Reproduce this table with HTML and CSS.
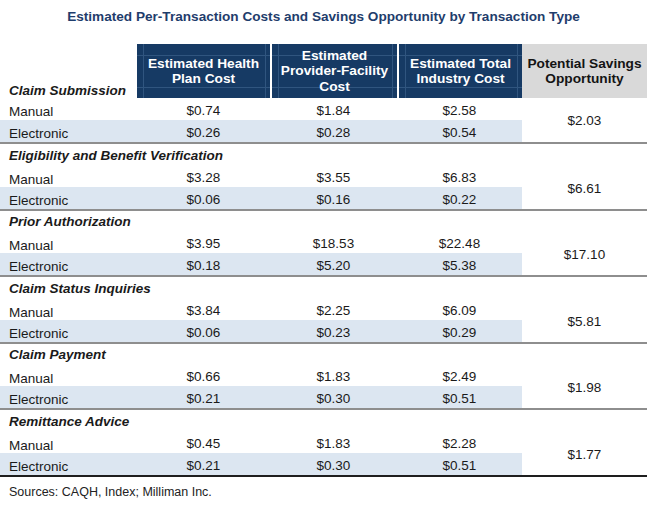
FILE: index.html
```html
<!DOCTYPE html>
<html lang="en">
<head>
<meta charset="utf-8">
<title>Per-Transaction Costs</title>
<link rel="stylesheet" href="styles.css">
</head>
<body>
<main class="page">
  <h1 class="title">Estimated Per-Transaction Costs and Savings Opportunity by Transaction Type</h1>
  <div class="table">
    <section class="group group-head">
      <div class="cat cat-head">Claim Submission</div>
      <div class="th navy">Estimated Health<br>Plan Cost</div>
      <div class="th navy sep">Estimated<br>Provider-Facility<br>Cost</div>
      <div class="th navy sep">Estimated Total<br>Industry Cost</div>
      <div class="th gray">Potential Savings<br>Opportunity</div>
      <div class="lbl">Manual</div><div class="val">$0.74</div><div class="val">$1.84</div><div class="val">$2.58</div>
      <div class="save">$2.03</div>
      <div class="lbl e">Electronic</div><div class="val e">$0.26</div><div class="val e">$0.28</div><div class="val e">$0.54</div>
    </section>
    <section class="group tall">
      <div class="cat">Eligibility and Benefit Verification</div>
      <div class="lbl">Manual</div><div class="val">$3.28</div><div class="val">$3.55</div><div class="val">$6.83</div>
      <div class="save">$6.61</div>
      <div class="lbl e">Electronic</div><div class="val e">$0.06</div><div class="val e">$0.16</div><div class="val e">$0.22</div>
    </section>
    <section class="group">
      <div class="cat">Prior Authorization</div>
      <div class="lbl">Manual</div><div class="val">$3.95</div><div class="val">$18.53</div><div class="val">$22.48</div>
      <div class="save">$17.10</div>
      <div class="lbl e">Electronic</div><div class="val e">$0.18</div><div class="val e">$5.20</div><div class="val e">$5.38</div>
    </section>
    <section class="group tall">
      <div class="cat">Claim Status Inquiries</div>
      <div class="lbl">Manual</div><div class="val">$3.84</div><div class="val">$2.25</div><div class="val">$6.09</div>
      <div class="save">$5.81</div>
      <div class="lbl e">Electronic</div><div class="val e">$0.06</div><div class="val e">$0.23</div><div class="val e">$0.29</div>
    </section>
    <section class="group">
      <div class="cat">Claim Payment</div>
      <div class="lbl">Manual</div><div class="val">$0.66</div><div class="val">$1.83</div><div class="val">$2.49</div>
      <div class="save">$1.98</div>
      <div class="lbl e">Electronic</div><div class="val e">$0.21</div><div class="val e">$0.30</div><div class="val e">$0.51</div>
    </section>
    <section class="group tall last">
      <div class="cat">Remittance Advice</div>
      <div class="lbl">Manual</div><div class="val">$0.45</div><div class="val">$1.83</div><div class="val">$2.28</div>
      <div class="save">$1.77</div>
      <div class="lbl e">Electronic</div><div class="val e">$0.21</div><div class="val e">$0.30</div><div class="val e">$0.51</div>
    </section>
  </div>
  <p class="source">Sources: CAQH, Index; Milliman Inc.</p>
</main>
</body>
</html>
```

FILE: styles.css
```css
html, body {
  margin: 0;
  padding: 0;
  background: #ffffff;
}

.page {
  width: 650px;
  font-family: "Liberation Sans", Arial, sans-serif;
  color: #1a1a1a;
  font-size: 13.5px;
}

.title {
  margin: 9px 0 0 0;
  padding-right: 3px;
  height: 35px;
  line-height: 16px;
  font-size: 13.6px;
  font-weight: bold;
  color: #1f3d6c;
  text-align: center;
}

.table {
  width: 647px;
}

.group {
  display: grid;
  grid-template-columns: 137px 133px 127px 125px 125px;
  grid-template-rows: 21px 21px 22px;
  border-bottom: 2px solid #8e8e8e;
}

.group.tall {
  grid-template-rows: 22px 21px 22px;
}

.group.last {
  border-bottom: 2px solid #1e1e1e;
}

.group-head {
  grid-template-rows: 54px 22px 22px;
}

.cat {
  grid-column: 1 / -1;
  display: flex;
  align-items: center;
  padding-left: 9px;
  font-weight: bold;
  font-style: italic;
}

.cat-head {
  grid-column: 1;
  align-items: flex-end;
  white-space: nowrap;
  line-height: 15px;
  padding-bottom: 0;
}

.th {
  display: flex;
  align-items: center;
  justify-content: center;
  text-align: center;
  font-weight: bold;
  font-size: 13.7px;
  line-height: 15.5px;
}

.navy {
  background-color: #163a64;
  color: #ffffff;
  background-image:
    linear-gradient(#30557f, #30557f),
    linear-gradient(#30557f, #30557f),
    linear-gradient(#30557f, #30557f),
    linear-gradient(#30557f, #30557f);
  background-size: 100% 1px, 100% 1px, 1px 100%, 1px 100%;
  background-position: 0 11px, 0 43px, 6px 0, calc(100% - 4px) 0;
  background-repeat: no-repeat;
}

.sep {
  border-left: 2px solid #ffffff;
}

.gray {
  background: #d9d9d9;
  color: #141414;
}

.lbl {
  display: flex;
  align-items: center;
  padding-left: 9px;
  padding-top: 5px;
}

.val {
  display: flex;
  align-items: center;
  justify-content: center;
  padding-top: 2px;
}

.e {
  background: #dce6f1;
}

.save {
  grid-column: 5;
  grid-row: span 2;
  display: flex;
  align-items: center;
  justify-content: center;
  padding-top: 1px;
  background: #ffffff;
}

.source {
  margin: 0;
  padding: 8px 0 0 9px;
  line-height: 14px;
  font-size: 12.5px;
  color: #222222;
}
```
